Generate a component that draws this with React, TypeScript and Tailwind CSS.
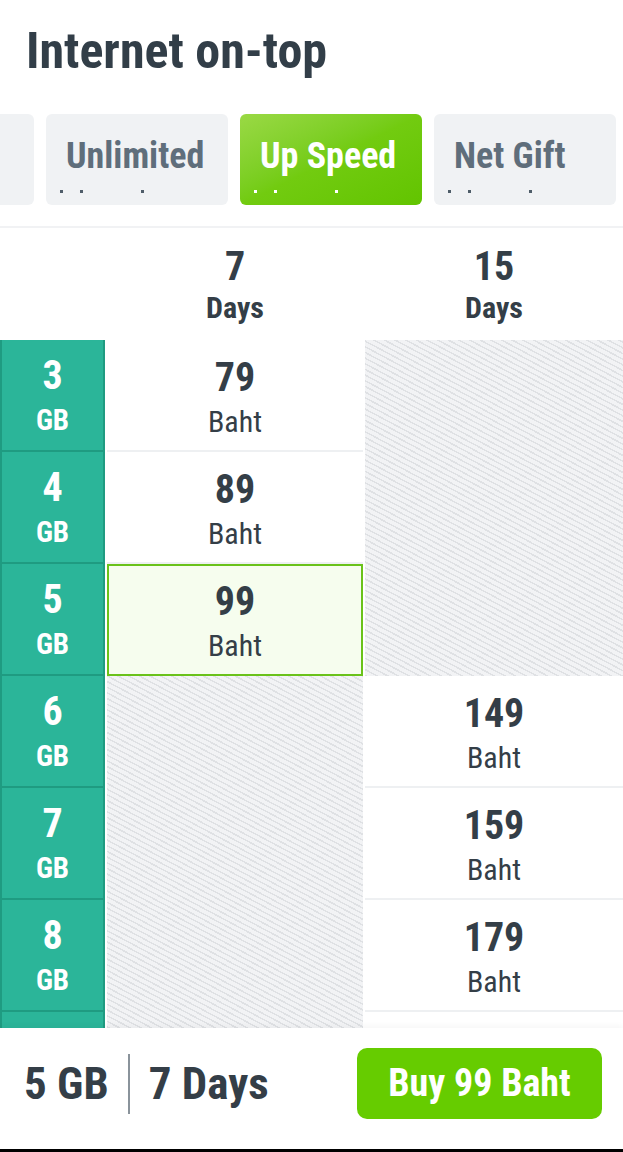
const font = { fontFamily: '"Roboto Condensed", "Liberation Sans Narrow", Roboto, sans-serif', fontStretch: "75%" };

const hatch =
  "bg-[repeating-linear-gradient(28deg,#dfe1e4_0px,#dfe1e4_1.5px,#f2f3f5_1.5px,#f2f3f5_5px)]";

interface Row {
  gb: number;
  week?: number;
  half?: number;
}

const rows: Array<Row> = [
  { gb: 3, week: 79 },
  { gb: 4, week: 89 },
  { gb: 5, week: 99 },
  { gb: 6, half: 149 },
  { gb: 7, half: 159 },
  { gb: 8, half: 179 },
];

function Tab({ label, active }: { label: string; active?: boolean }) {
  const dot = active ? "h-[3px] w-[3px] bg-white" : "h-[3px] w-[3px] bg-[#4f5d69]";
  return (
    <div
      className={
        active
          ? "flex h-[91px] w-[182px] shrink-0 flex-col rounded-md bg-gradient-to-br from-[#9ad944] via-[#72cb10] to-[#62c400] px-5 pt-[24px]"
          : "flex h-[91px] w-[182px] shrink-0 flex-col rounded-md bg-[#f0f2f4] px-5 pt-[24px]"
      }
    >
      <span
        className={
          active
            ? "text-[36px] leading-none font-bold text-white"
            : "text-[36px] leading-none font-bold text-[#5f6e7b]"
        }
      >
        {label}
      </span>
      <div className="mt-[16px] -ml-[6px] flex">
        <span className={dot} />
        <span className={"ml-[17px] " + dot} />
        <span className={"ml-[58px] " + dot} />
      </div>
    </div>
  );
}

function Price({ value, selected }: { value: number; selected?: boolean }) {
  return (
    <div
      className={
        selected
          ? "flex h-[112px] flex-col items-center border-2 border-[#6ac21a] bg-[#f6fdee] pt-[14px]"
          : "flex h-[112px] flex-col items-center border-b-2 border-[#eef0f2] bg-white pt-4"
      }
    >
      <span className="text-[40px] leading-[44px] font-bold text-[#343e47]">{value}</span>
      <span className="mt-[6px] text-[30px] leading-8 text-[#343e47]">Baht</span>
    </div>
  );
}

export default function App() {
  return (
    <div className="flex h-[1152px] w-[623px] flex-col overflow-hidden bg-white" style={font}>
      <div className="px-[26px] pt-[22px] pb-[34px]">
        <h1 className="text-[50px] leading-[58px] font-bold text-[#323e48]">Internet on-top</h1>
      </div>
      <div className="flex gap-3">
        <div className="h-[91px] w-[34px] shrink-0 rounded-r-md bg-[#f0f2f4]" />
        <Tab label="Unlimited" />
        <Tab label="Up Speed" active />
        <Tab label="Net Gift" />
      </div>
      <div className="mt-[21px] border-t-2 border-[#f1f2f4]" />
      <div className="flex-1 overflow-hidden">
        <div className="grid grid-cols-[105px_256px_258px] gap-x-[2px]">
          <div className="h-[112px]" />
          <div className="flex flex-col items-center pt-[16px]">
            <span className="text-[40px] leading-[46px] font-bold text-[#343e47]">7</span>
            <span className="mt-[2px] text-[30px] leading-8 font-bold text-[#343e47]">Days</span>
          </div>
          <div className="flex flex-col items-center pt-[16px]">
            <span className="text-[40px] leading-[46px] font-bold text-[#343e47]">15</span>
            <span className="mt-[2px] text-[30px] leading-8 font-bold text-[#343e47]">Days</span>
          </div>
          {rows.map((row, i) => (
            <div
              key={row.gb}
              className="flex h-[112px] flex-col items-center border-2 border-t-0 border-[#1f9b81] bg-[#2bb599] pt-[14px] text-white"
              style={{ gridColumn: 1, gridRow: i + 2 }}
            >
              <span className="text-[40px] leading-[44px] font-bold">{row.gb}</span>
              <span className="mt-[6px] text-[29px] leading-8 font-bold">GB</span>
            </div>
          ))}
          {rows.map((row, i) =>
            row.week ? (
              <div key={"w" + row.gb} style={{ gridColumn: 2, gridRow: i + 2 }}>
                <Price value={row.week} selected={row.gb === 5} />
              </div>
            ) : null,
          )}
          {rows.map((row, i) =>
            row.half ? (
              <div key={"h" + row.gb} style={{ gridColumn: 3, gridRow: i + 2 }}>
                <Price value={row.half} />
              </div>
            ) : null,
          )}
          {/* next row, scrolled under the footer */}
          <div className="h-[112px] border-2 border-t-0 border-[#1f9b81] bg-[#2bb599]" style={{ gridColumn: 1, gridRow: 8 }} />
          <div className="h-[112px] bg-white" style={{ gridColumn: 3, gridRow: 8 }} />
          <div className={hatch} style={{ gridColumn: 3, gridRow: "2 / span 3" }} />
          <div className={hatch} style={{ gridColumn: 2, gridRow: "5 / span 4" }} />
        </div>
      </div>
      <div className="flex h-[121px] shrink-0 items-start justify-between bg-white pt-[20px] pr-[21px] pl-[24px] shadow-[0_-2px_6px_rgba(0,0,0,0.04)]">
        <div className="flex h-[71px] items-center text-[45px] leading-none font-bold text-[#343e47]">
          <span>5 GB</span>
          <span className="mx-[19px] h-[60px] w-[2px] bg-[#8a939b]" />
          <span>7 Days</span>
        </div>
        <button className="flex h-[71px] w-[245px] items-center justify-center rounded-[10px] bg-[#66cc00] text-[38px] font-bold text-white">
          Buy 99 Baht
        </button>
      </div>
      <div className="h-[3px] shrink-0 bg-black" />
    </div>
  );
}
